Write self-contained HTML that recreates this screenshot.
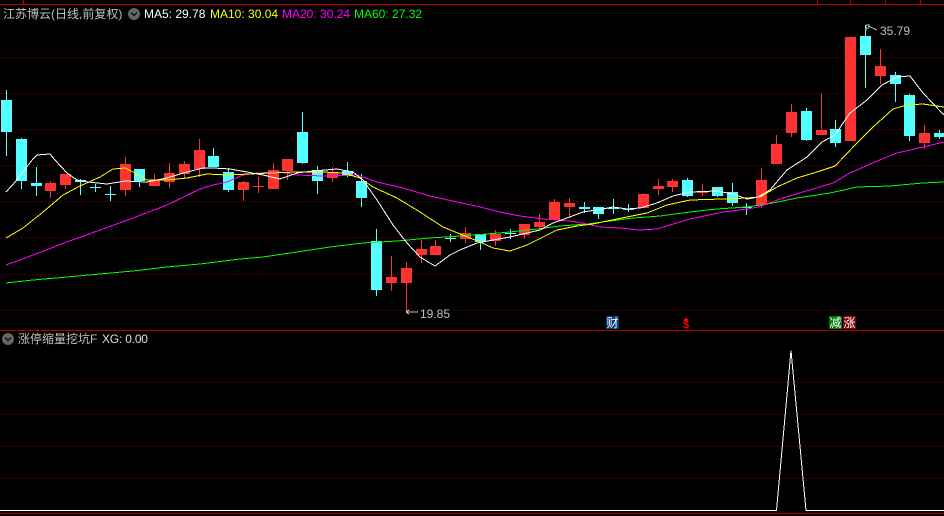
<!DOCTYPE html>
<html><head><meta charset="utf-8"><style>
html,body{margin:0;padding:0;background:#000;width:944px;height:516px;overflow:hidden}
svg{display:block;position:absolute;left:0;top:0}
.t{position:absolute;white-space:pre;font:12px/14px "Liberation Sans","WenQuanYi Zen Hei","Noto Sans CJK SC",sans-serif;color:#c0c0c0}
.m{position:absolute;width:13px;height:13px;font:12px/13px "WenQuanYi Zen Hei","Noto Sans CJK SC",sans-serif;color:#fff;text-align:center}
</style></head><body>
<svg width="944" height="516" viewBox="0 0 944 516" shape-rendering="crispEdges">
<g stroke="#a80000" stroke-width="1" stroke-dasharray="1 3" fill="none">
<path d="M1 57.5H944M1 93.5H944M1 129.5H944M1 165.5H944M1 201.5H944M1 237.5H944M1 274.5H944M1 310.5H944M1 382.5H944M1 414.5H944M1 446.5H944M1 478.5H944"/>
</g>
<path fill="#c00000" d="M0 4h944v1H0zM23 0h1v4h-1zM817 0h1v4h-1zM850 0h1v4h-1zM885 0h1v4h-1zM920 0h1v4h-1z"/>
<path fill="#b00000" d="M0 330h944v1H0zM0 513h944v1H0z"/>
<path fill="#54ffff" d="M1 100h11v32H1zM6 90h1v66H6zM16 139h11v42H16zM21 138h1v51h-1zM31 183h11v3H31zM36 167h1v29h-1zM75 180h11v2H75zM80 179h1v16h-1zM90 187h11v1H90zM95 184h1v8h-1zM105 194h11v1h-11zM110 186h1v15h-1zM134 169h11v12h-11zM139 169h1v18h-1zM208 156h11v11h-11zM213 148h1v19h-1zM223 172h11v18h-11zM228 168h1v24h-1zM297 132h11v31h-11zM302 112h1v52h-1zM312 170h11v11h-11zM317 166h1v28h-1zM342 171h11v5h-11zM347 162h1v15h-1zM356 181h11v17h-11zM361 174h1v33h-1zM371 241h11v49h-11zM376 229h1v67h-1zM445 238h11v1h-11zM450 234h1v8h-1zM475 234h11v8h-11zM480 234h1v16h-1zM505 233h11v1h-11zM510 229h1v10h-1zM579 207h11v2h-11zM584 202h1v11h-1zM593 207h11v7h-11zM598 207h1v12h-1zM608 208h11v1h-11zM613 199h1v15h-1zM623 209h11v1h-11zM628 204h1v8h-1zM682 180h11v16h-11zM687 178h1v19h-1zM712 187h11v9h-11zM717 187h1v10h-1zM727 192h11v11h-11zM732 183h1v23h-1zM741 207h11v1h-11zM746 203h1v12h-1zM801 111h11v29h-11zM806 108h1v33h-1zM830 129h11v14h-11zM835 120h1v27h-1zM860 36h11v19h-11zM865 25h1v63h-1zM890 75h11v9h-11zM895 72h1v30h-1zM904 95h11v41h-11zM909 94h1v47h-1zM934 133h10v4h-10zM939 130h1v9h-1z"/>
<path fill="#ff3232" d="M45 183h11v8H45zM50 181h1v17h-1zM60 174h11v11H60zM65 174h1v15h-1zM120 164h11v26h-11zM125 157h1v39h-1zM149 180h11v6h-11zM154 174h1v12h-1zM164 173h11v9h-11zM169 163h1v25h-1zM179 164h11v10h-11zM184 161h1v18h-1zM194 150h11v19h-11zM199 139h1v38h-1zM238 182h11v8h-11zM243 181h1v20h-1zM253 186h11v1h-11zM258 177h1v16h-1zM268 170h11v19h-11zM273 163h1v26h-1zM282 159h11v12h-11zM287 159h1v21h-1zM327 172h11v6h-11zM332 167h1v15h-1zM386 277h11v6h-11zM391 256h1v35h-1zM401 268h11v15h-11zM406 262h1v49h-1zM416 249h11v6h-11zM421 240h1v23h-1zM430 246h11v9h-11zM435 240h1v15h-1zM460 233h11v6h-11zM465 227h1v16h-1zM490 234h11v7h-11zM495 230h1v16h-1zM519 224h11v11h-11zM524 224h1v15h-1zM534 222h11v5h-11zM539 214h1v16h-1zM549 202h11v18h-11zM554 199h1v21h-1zM564 203h11v4h-11zM569 198h1v20h-1zM638 194h11v14h-11zM643 193h1v15h-1zM653 186h11v3h-11zM658 179h1v16h-1zM667 181h11v6h-11zM672 179h1v13h-1zM697 192h11v1h-11zM702 184h1v12h-1zM756 180h11v25h-11zM761 168h1v40h-1zM771 144h11v20h-11zM776 135h1v29h-1zM786 112h11v21h-11zM791 104h1v33h-1zM816 130h11v5h-11zM821 94h1v41h-1zM845 37h11v104h-11zM875 66h11v10h-11zM880 49h1v35h-1zM919 133h11v10h-11zM924 125h1v24h-1z"/>
<g fill="none" stroke-width="1">
<path stroke="#00ff00" d="M6 283L33 280L67 277L100 274L133 271L167 267L200 264L240 259L263 257L297 252L330 247L363 243L397 241L430 238L460 236L487 234L510 232L537 229L560 226L587 224L610 221L633 218L660 216L690 212L717 209L747 207L773 203L797 198L830 193L857 187L890 186L923 183L944 182"/>
<path stroke="#ff00ff" d="M6 265L33 255L67 242L100 230L133 218L167 205L200 189L213 185L227 182L243 175L257 173L280 172L297 175L323 176L357 175L377 182L403 188L430 196L457 202L480 207L500 212L520 216L543 219L570 221L587 224L600 227L620 228L640 230L657 229L670 225L690 219L723 212L747 209L758 207L783 198L803 192L833 183L850 173L877 161L897 153L923 147L944 142"/>
<path stroke="#ffff00" d="M6 238L23 228L43 212L63 195L80 186L100 177L113 169L125 168L133 172L147 180L167 180L187 178L207 174L227 175L250 174L270 173L297 172L323 172L343 173L360 178L373 187L397 198L420 212L443 227L460 234L480 242L493 248L510 251L527 245L543 237L557 230L577 226L593 224L607 221L627 217L647 213L667 205L690 200L723 199L747 198L760 197L777 187L797 178L817 172L835 166L857 143L873 127L893 109L907 105L923 104L944 107"/>
<path stroke="#ffffff" d="M6 192L16 181L25 169L33 159L37 155L50 154L55 160L67 173L77 180L88 182L107 184L125 181L147 182L167 178L187 172L203 168L213 168L230 169L247 172L263 175L280 179L297 173L313 171L337 169L353 172L363 180L377 200L393 225L407 243L420 257L435 266L450 255L460 250L477 243L493 240L510 237L527 233L540 230L553 223L567 218L583 212L603 209L613 207L627 209L640 208L657 203L673 196L690 192L717 191L733 194L747 199L758 197L770 190L787 170L807 157L822 142L835 135L850 113L867 100L882 85L897 77L910 76L923 93L944 115"/>
<path stroke="#ffffff" d="M0 510.5H776.5L791 350.5L806 510.5H944"/>
<path stroke="#c0c0c0" d="M406 312H418M406 312l3-2M406 312l3 2M866 25V31M866 25h4M866 28h3M868 26l9 4"/>
</g>
<circle cx="134" cy="14" r="6" fill="#666" shape-rendering="auto"/>
<circle cx="8" cy="339" r="6" fill="#666" shape-rendering="auto"/>
<path d="M131 12.5L134 15.5L137 12.5M5 337.5L8 340.5L11 337.5" fill="none" stroke="#111" stroke-width="1.4" shape-rendering="auto"/>
<path fill="#0a3a78" d="M606 316h13v13h-13z"/>
<path fill="#007a00" d="M829 316h13v13h-13z"/>
<path fill="#800000" d="M843 316h13v13h-13z"/>
<path fill="#ff0000" d="M685 318h2v1h-2zM684 319h4v2h-4z"/>
</svg>
<div class="t" style="left:3px;top:7px">江苏博云(日线,前复权)</div>
<div class="t" style="left:144px;top:7px;color:#fff">MA5: 29.78</div>
<div class="t" style="left:210px;top:7px;color:#ff0">MA10: 30.04</div>
<div class="t" style="left:282px;top:7px;color:#f0f">MA20: 30.24</div>
<div class="t" style="left:354px;top:7px;color:#0f0">MA60: 27.32</div>
<div class="t" style="left:18px;top:332px">涨停缩量挖坑F</div>
<div class="t" style="left:102px;top:332px;color:#e0e0e0;letter-spacing:-.2px">XG: 0.00</div>
<div class="t" style="left:420px;top:307px">19.85</div>
<div class="t" style="left:880px;top:24px">35.79</div>
<div class="t" style="left:683px;top:320px;color:#f00;font-weight:bold;font-size:11px;line-height:10px">$</div>
<div class="m" style="left:606px;top:316px">财</div>
<div class="m" style="left:829px;top:316px">减</div>
<div class="m" style="left:843px;top:316px">涨</div>
</body></html>
